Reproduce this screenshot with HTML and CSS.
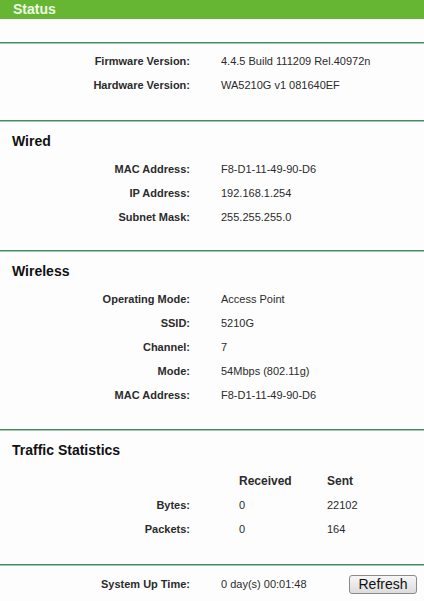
FILE: index.html
```html
<!DOCTYPE html>
<html>
<head>
<meta charset="utf-8">
<link rel="stylesheet" href="styles.css">
</head>
<body>
<div class="topbar">Status</div>
<div class="gap"></div>

<section class="sec sec-first">
  <div class="row"><span class="lbl">Firmware Version:</span><span class="val">4.4.5 Build 111209 Rel.40972n</span></div>
  <div class="row"><span class="lbl">Hardware Version:</span><span class="val">WA5210G v1 081640EF</span></div>
</section>

<section class="sec sec-wired">
  <h2 class="title">Wired</h2>
  <div class="row"><span class="lbl">MAC Address:</span><span class="val">F8-D1-11-49-90-D6</span></div>
  <div class="row"><span class="lbl">IP Address:</span><span class="val">192.168.1.254</span></div>
  <div class="row"><span class="lbl">Subnet Mask:</span><span class="val">255.255.255.0</span></div>
</section>

<section class="sec sec-wireless">
  <h2 class="title">Wireless</h2>
  <div class="row"><span class="lbl">Operating Mode:</span><span class="val">Access Point</span></div>
  <div class="row"><span class="lbl">SSID:</span><span class="val">5210G</span></div>
  <div class="row"><span class="lbl">Channel:</span><span class="val">7</span></div>
  <div class="row"><span class="lbl">Mode:</span><span class="val">54Mbps (802.11g)</span></div>
  <div class="row"><span class="lbl">MAC Address:</span><span class="val">F8-D1-11-49-90-D6</span></div>
</section>

<section class="sec sec-traffic">
  <h2 class="title">Traffic Statistics</h2>
  <div class="row trow thead"><span class="lbl"></span><span class="c1">Received</span><span class="c2">Sent</span></div>
  <div class="row trow"><span class="lbl">Bytes:</span><span class="c1">0</span><span class="c2">22102</span></div>
  <div class="row trow"><span class="lbl">Packets:</span><span class="c1">0</span><span class="c2">164</span></div>
</section>

<section class="sec sec-foot">
  <div class="row"><span class="lbl">System Up Time:</span><span class="val uptime">0 day(s) 00:01:48</span><button class="btn">Refresh</button></div>
</section>
</body>
</html>
```

FILE: styles.css
```css
html, body {
  margin: 0;
  padding: 0;
  background: #ffffff;
}
body {
  font-family: "Liberation Sans", Arial, sans-serif;
  font-size: 11px;
  color: #222;
  width: 424px;
  overflow: hidden;
}
.topbar {
  height: 19px;
  line-height: 19px;
  background: #66b634;
  color: #eef8e2;
  font-weight: bold;
  font-size: 14px;
  padding-left: 13px;
}
.gap {
  height: 23px;
  background: #fdfdfd;
}
.sec {
  border-top: 1px solid #4a8766;
  box-shadow: inset 0 1px 0 #a3c8b0;
  background: #fdfdfd;
}
.sec-first {
  padding-top: 6px;
  padding-bottom: 23px;
}
.sec-wired {
  padding-top: 8px;
  padding-bottom: 21px;
}
.sec-wireless {
  padding-top: 8px;
  padding-bottom: 22px;
}
.sec-traffic {
  padding-top: 8px;
  padding-bottom: 23px;
}
.sec-foot {
  padding-top: 7px;
  height: 30px;
}
.title {
  margin: 0 0 4px 0;
  height: 24px;
  line-height: 24px;
  font-size: 14px;
  font-weight: bold;
  color: #111;
  padding-left: 12px;
}
.row {
  display: flex;
  align-items: center;
  height: 24px;
}
.lbl {
  width: 190px;
  text-align: right;
  font-weight: bold;
  color: #2b2b2b;
  flex: none;
}
.val {
  margin-left: 31px;
  color: #2b2b2b;
}
.trow .c1 {
  margin-left: 49px;
  width: 88px;
  color: #2b2b2b;
}
.trow .c2 {
  color: #2b2b2b;
}
.sec-traffic .thead {
  margin-top: 7px;
}
.thead .c1, .thead .c2 {
  font-weight: bold;
  font-size: 12px;
  color: #2b2b2b;
}
.uptime {
  width: 128px;
}
.btn {
  width: 68px;
  height: 19px;
  padding: 0;
  font-family: "Liberation Sans", Arial, sans-serif;
  font-size: 14px;
  line-height: 17px;
  color: #111;
  background: linear-gradient(#f6f6f6, #dcdcdc);
  border: 1px solid #8a8a8a;
  border-radius: 3px;
}
```
